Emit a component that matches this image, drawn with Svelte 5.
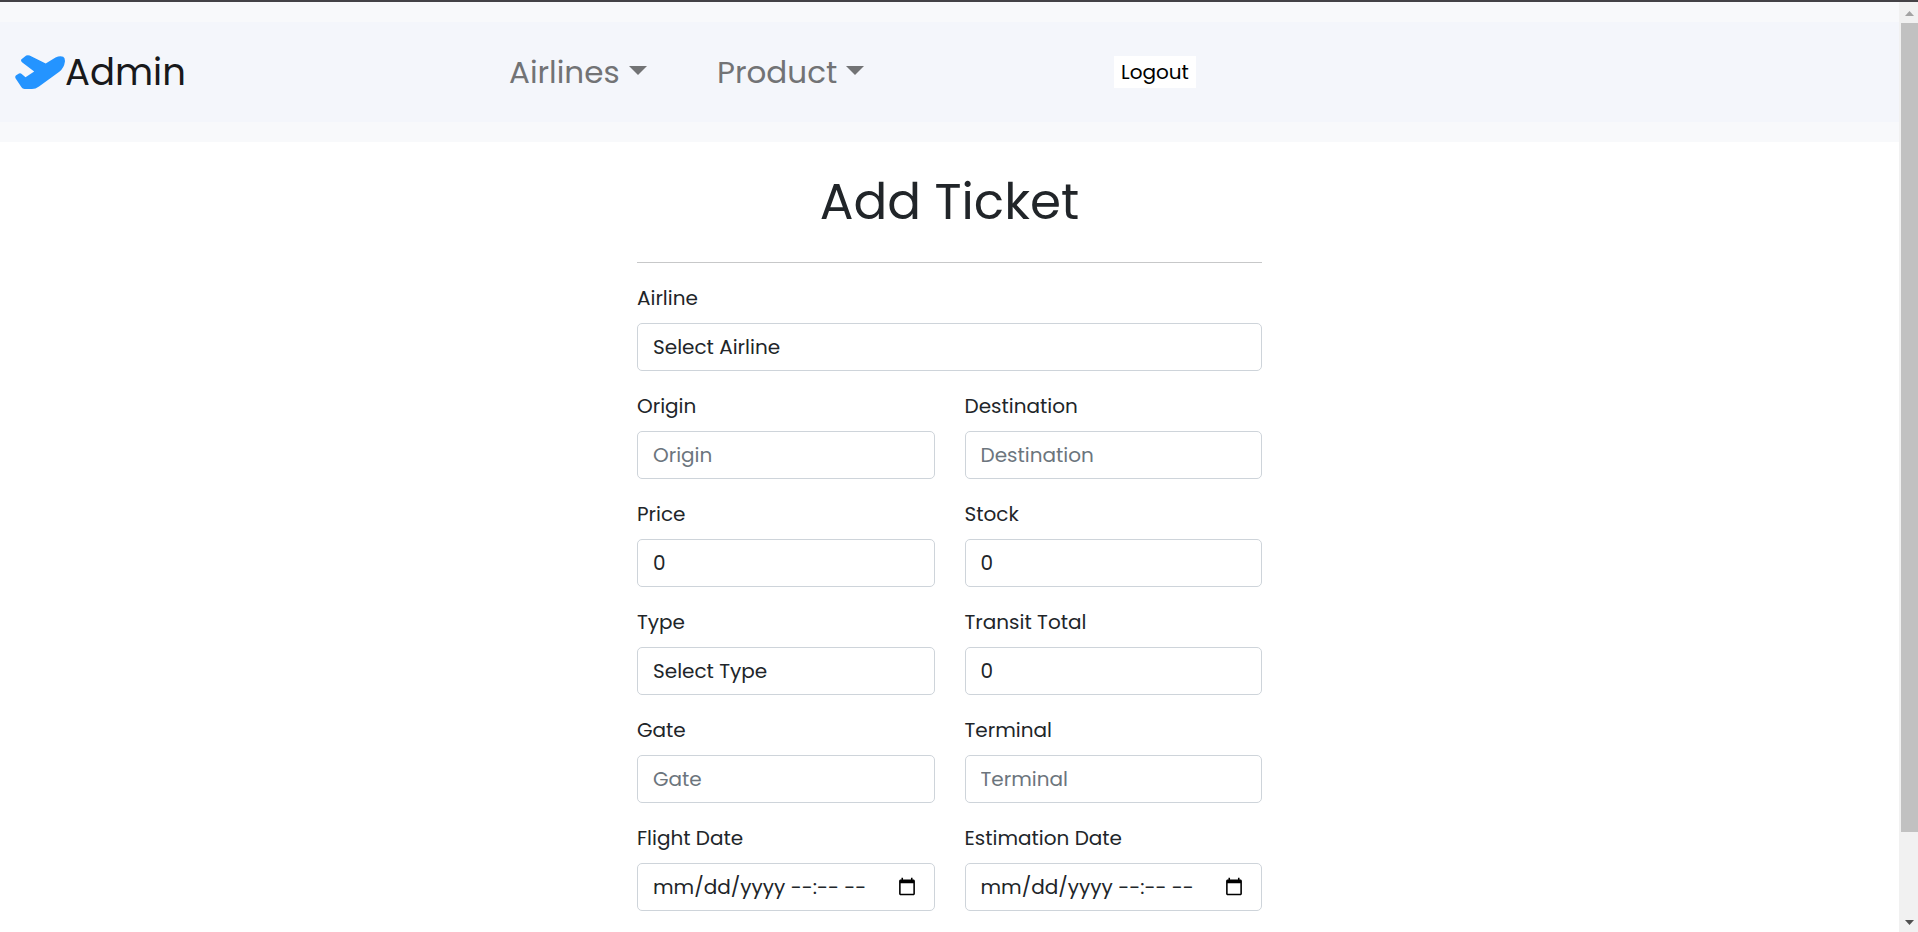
<script>
  const menus = ['Airlines', 'Product'];

  const fields = [
    { id: 'airline', label: 'Airline', type: 'select', wide: true },
    { id: 'origin', label: 'Origin', type: 'text' },
    { id: 'destination', label: 'Destination', type: 'text' },
    { id: 'price', label: 'Price', type: 'number' },
    { id: 'stock', label: 'Stock', type: 'number' },
    { id: 'type', label: 'Type', type: 'select' },
    { id: 'transit', label: 'Transit Total', type: 'number' },
    { id: 'gate', label: 'Gate', type: 'text' },
    { id: 'terminal', label: 'Terminal', type: 'text' },
    { id: 'flight-date', label: 'Flight Date', type: 'datetime-local' },
    { id: 'estimation-date', label: 'Estimation Date', type: 'datetime-local' }
  ];

  let dates = $state({ 'flight-date': '', 'estimation-date': '' });
</script>

<div class="shell">
  <div class="content">
    <header>
      <nav>
        <a class="brand" href="#home">
          <svg class="plane" viewBox="0 0 50 34" aria-hidden="true">
            <path d="M6.5 4.2 11.2.6Q12.700-.2 14.600.5L30.700 8.600 40.500 2.500Q45 .3 48.200 1.700Q50.300 3 49.900 6.800Q49 13.200 44.300 16.800L24 31.500Q20.500 34 17 34H9.500Q7.500 34 6.500 32.300L.5 23.200Q-.3 21.400 1.200 20.200L4 18.500Q5.500 17.900 6.700 18.900L10.500 22.300 19.200 16.600 7 7.200Q5.300 5.500 6.500 4.200Z" />
          </svg>
          <span>Admin</span>
        </a>
        {#each menus as menu}
          <button class="menu" type="button">
            {menu}
            <svg class="caret" viewBox="0 0 18 9" aria-hidden="true"><path d="M0 0h18L9 9z" /></svg>
          </button>
        {/each}
        <button class="logout" type="button">Logout</button>
      </nav>
    </header>

    <main>
      <h1>Add Ticket</h1>
      <hr />
      <form>
        {#each fields as field}
          <div class="field" class:wide={field.wide}>
            <label for={field.id}>{field.label}</label>
            {#if field.type === 'select'}
              <select id={field.id}>
                <option>Select {field.label}</option>
              </select>
            {:else if field.type === 'number'}
              <input id={field.id} type="number" value="0" />
            {:else if field.type === 'datetime-local'}
              <div class="date" class:empty={!dates[field.id]}>
                <input id={field.id} type="datetime-local" bind:value={dates[field.id]} />
                {#if !dates[field.id]}
                  <span class="hint" aria-hidden="true">mm/dd/yyyy --:-- --</span>
                {/if}
              </div>
            {:else}
              <input id={field.id} type="text" placeholder={field.label} />
            {/if}
          </div>
        {/each}
      </form>
    </main>
  </div>

  <div class="scrollbar" aria-hidden="true">
    <svg class="arrow up" viewBox="0 0 9 5"><path d="M0 5h9L4.500 0z" /></svg>
    <div class="track"><div class="thumb"></div></div>
    <svg class="arrow" viewBox="0 0 9 5"><path d="M0 0h9L4.500 5z" /></svg>
  </div>
</div>

<style>
  :global(body) {
    margin: 0;
    overflow: hidden;
  }

  .shell,
  .shell * {
    box-sizing: border-box;
  }

  .shell {
    display: flex;
    height: 100vh;
    border-top: 2px solid #444246;
    background: #fff;
    color: #212529;
    font-family: Poppins, Inter, sans-serif;
    font-size: 20px;
    font-weight: 400;
    line-height: 30px;
  }

  .content {
    flex: 1;
    min-width: 0;
    overflow: hidden;
  }

  header {
    padding: 20px 0;
    background: #f8f9fb;
  }

  nav {
    display: grid;
    grid-template-columns: 494fr 208fr 397fr 770fr;
    align-items: center;
    justify-items: start;
    min-height: 100px;
    padding: 0 15px;
    background: #f4f6fb;
  }

  button {
    border: 0;
    font: inherit;
    white-space: nowrap;
  }

  .brand {
    display: flex;
    align-items: center;
    color: #18191b;
    font-size: 37px;
    line-height: 56px;
    text-decoration: none;
  }

  .plane {
    width: 50px;
    height: 34px;
    fill: #2494ff;
  }

  .menu {
    display: flex;
    align-items: center;
    gap: 9px;
    padding: 0;
    background: none;
    color: #727375;
    font-size: 31px;
    line-height: 48px;
  }

  .caret {
    width: 18px;
    height: 9px;
    margin-bottom: 4px;
    fill: #727375;
  }

  .logout {
    padding: 1px 7px;
    background: #fff;
    color: #000;
  }

  main {
    width: 625px;
    max-width: 100%;
    margin: 0 auto;
    padding-top: 30px;
  }

  h1 {
    margin: 0;
    font-size: 50px;
    font-weight: 400;
    line-height: 60px;
    text-align: center;
  }

  hr {
    height: 1px;
    margin: 30px 0 20px;
    border: 0;
    background: #c7c8c9;
  }

  form {
    display: grid;
    grid-template-columns: 1fr 1fr;
    gap: 20px 30px;
  }

  .field {
    display: flex;
    flex-direction: column;
    gap: 10px;
    min-width: 0;
  }

  .wide {
    grid-column: 1 / -1;
  }

  input,
  select {
    appearance: none;
    width: 100%;
    height: 48px;
    margin: 0;
    padding: 8px 15px;
    border: 1px solid #ced4da;
    border-radius: 5px;
    background: #fff;
    color: #212529;
    font: inherit;
  }

  input::placeholder {
    color: #6c757d;
    opacity: 1;
  }

  .date {
    position: relative;
    display: flex;
  }

  .empty input::-webkit-datetime-edit {
    opacity: 0;
  }

  .hint {
    position: absolute;
    top: 9px;
    left: 16px;
    pointer-events: none;
  }

  .scrollbar {
    display: flex;
    flex-direction: column;
    align-items: center;
    flex: none;
    width: 19px;
    padding: 9px 0 7px 2px;
    background: #f1f1f1;
  }

  .arrow {
    width: 9px;
    height: 5px;
    fill: #505050;
  }

  .up {
    fill: #a3a3a3;
  }

  .track {
    flex: 1;
    align-self: stretch;
    padding: 7px 0 8px;
  }

  .thumb {
    height: 91%;
    background: #c1c1c1;
  }
</style>
